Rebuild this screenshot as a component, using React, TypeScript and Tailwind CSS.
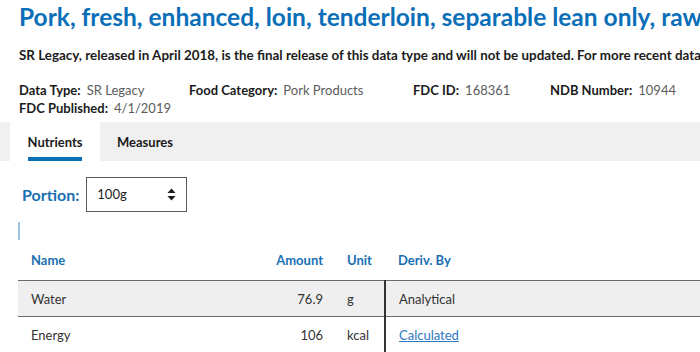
const rows = [
  { name: "Water", amount: "76.9", unit: "g", deriv: "Analytical", link: false },
  { name: "Energy", amount: "106", unit: "kcal", deriv: "Calculated", link: true },
];

export default function App() {
  return (
    <div className="w-[700px] h-[352px] overflow-hidden bg-white pt-[2px] font-['Lato',sans-serif] text-[#333]">
      {/* Heading */}
      <div className="px-[19px]">
        <h1 className="whitespace-nowrap text-[24.5px] leading-[30px] font-bold text-[#0b6fb8]">
          Pork, fresh, enhanced, loin, tenderloin, separable lean only, raw
        </h1>
        <p className="mt-[14px] whitespace-nowrap text-[13.4px] leading-[18px] font-bold text-[#1b1b1b]">
          SR Legacy, released in April 2018, is the final release of this data type and will not be updated. For more recent data, search other data types.
        </p>
        <div className="mt-[17px] flex text-[13px] leading-[18px]">
          <Field label="Data Type:" value="SR Legacy" w="w-[170px]" />
          <Field label="Food Category:" value="Pork Products" w="w-[224px]" />
          <Field label="FDC ID:" value="168361" w="w-[137px]" />
          <Field label="NDB Number:" value="10944" w="" />
        </div>
        <div className="text-[13px] leading-[18px]">
          <Field label="FDC Published:" value="4/1/2019" w="" />
        </div>
      </div>

      {/* Tabs */}
      <div className="mt-[5px] flex h-[39px] bg-[#f0f0f0] pl-[10px]">
        <div className="flex w-[90px] justify-center bg-white">
          <div className="flex h-full flex-col justify-between">
            <span className="pt-[11px] text-[13px] font-bold text-[#1b1b1b]">Nutrients</span>
            <span className="h-[4px] w-full bg-[#0b6fb8]" />
          </div>
        </div>
        <div className="pl-[17px] pt-[11px] text-[13px] font-bold text-[#1b1b1b]">Measures</div>
      </div>

      {/* Portion */}
      <div className="mt-[16px] flex items-center pl-[22px]">
        <span className="text-[16px] font-bold text-[#1a6fb3]">Portion:</span>
        <div className="ml-[7px] flex h-[35px] w-[101px] items-center justify-between border border-[#565c65] pl-[10px] pr-[10px] text-[13px] text-[#1b1b1b]">
          <span>100g</span>
          <svg width="9" height="13" viewBox="0 0 9 13" fill="#1b1b1b">
            <path d="M4.5 0.5 L8.5 5 L0.5 5 Z" />
            <path d="M0.5 8 L8.5 8 L4.5 12.5 Z" />
          </svg>
        </div>
      </div>
      <div className="ml-[18px] mt-[10px] h-[18px] w-[2px] bg-[#9fc3e4]" />

      {/* Table */}
      <table className="ml-[18px] mt-[3px] w-[700px] table-fixed border-collapse text-[13px] leading-[18px]">
        <thead>
          <tr className="border-b border-[#6b6b6b] text-left font-bold text-[#1a6fb3]">
            <th className="w-[240px] pl-[13px] pt-[8px] pb-[11px]">Name</th>
            <th className="w-[75px] pr-[10px] pt-[8px] pb-[11px] text-right">Amount</th>
            <th className="w-[52px] pl-[14px] pt-[8px] pb-[11px]">Unit</th>
            <th className="pl-[13px] pt-[8px] pb-[11px]">Deriv. By</th>
          </tr>
        </thead>
        <tbody>
          {rows.map((r, i) => (
            <tr key={r.name} className={`border-b border-[#6b6b6b] text-[#333] ${i === 0 ? "bg-[#efefef]" : ""}`}>
              <td className="h-[36px] pl-[13px]">{r.name}</td>
              <td className="pr-[10px] text-right">{r.amount}</td>
              <td className="border-r-2 border-[#333] pl-[14px]">{r.unit}</td>
              <td className="pl-[13px]">
                {r.link ? <span className="text-[#2b79c2] underline">{r.deriv}</span> : r.deriv}
              </td>
            </tr>
          ))}
        </tbody>
      </table>
    </div>
  );
}

function Field({ label, value, w }: { label: string; value: string; w: string }) {
  return (
    <div className={`${w} whitespace-nowrap`}>
      <span className="font-bold text-[#1b1b1b]">{label}</span>
      <span className="ml-[6px] text-[#5c5c5c]">{value}</span>
    </div>
  );
}
